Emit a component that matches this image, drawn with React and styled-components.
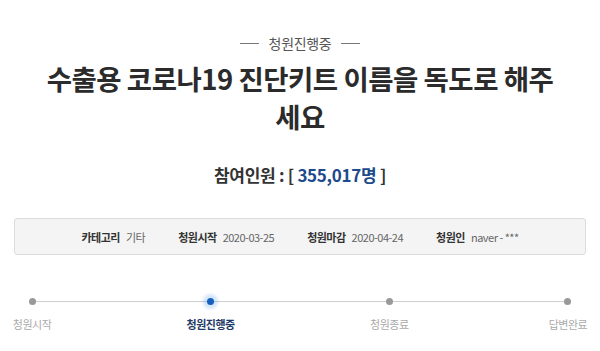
import React from "react";
import styled, { createGlobalStyle } from "styled-components";

const GlobalStyle = createGlobalStyle`
  html, body {
    margin: 0;
    padding: 0;
    background: #ffffff;
    font-family: "Noto Sans CJK KR", "Noto Sans", sans-serif;
  }
`;

const Page = styled.div`
  width: 600px;
  height: 351px;
  overflow: hidden;
  padding-top: 33px;
  box-sizing: border-box;
`;

const Status = styled.div`
  display: flex;
  align-items: center;
  justify-content: center;
  gap: 10px;
  height: 20px;
  font-size: 14px;
  color: #555;
  letter-spacing: -0.3px;

  &::before,
  &::after {
    content: "";
    width: 19px;
    height: 1px;
    background: #777;
  }
`;

const Title = styled.h1`
  margin: 6px 0 0;
  text-align: center;
  font-size: 27.5px;
  line-height: 38px;
  font-weight: 700;
  color: #2b2b2b;
  letter-spacing: -0.5px;
  padding: 0 30px;
`;

const Count = styled.div`
  margin-top: 28px;
  text-align: center;
  font-size: 17px;
  line-height: 24px;
  font-weight: 700;
  color: #333;
  letter-spacing: -0.3px;
`;

const Num = styled.span`
  color: #1d4a8c;
`;

const InfoBox = styled.div`
  margin: 31px 14px 0;
  height: 37px;
  box-sizing: border-box;
  border: 1px solid #dcdcdc;
  border-radius: 3px;
  background: #f4f4f4;
  display: flex;
  align-items: center;
  justify-content: center;
  gap: 33px;
`;

const InfoItem = styled.div`
  display: flex;
  align-items: center;
  gap: 6px;
  font-size: 11px;
  letter-spacing: -0.5px;
`;

const InfoLabel = styled.span`
  font-weight: 700;
  color: #333;
`;

const InfoValue = styled.span`
  color: #666;
`;

const Track = styled.div`
  position: relative;
  margin: 43px 14px 0;
  display: flex;
  justify-content: space-between;

  &::before {
    content: "";
    position: absolute;
    left: 18px;
    right: 20px;
    top: 3px;
    height: 1px;
    background: #cfcfcf;
  }
`;

const Step = styled.div`
  width: 36px;
  display: flex;
  flex-direction: column;
  align-items: center;
  position: relative;
`;

const Dot = styled.span`
  width: 7px;
  height: 7px;
  border-radius: 50%;
  background: ${(p) => (p.$active ? "#1660c0" : "#999")};
  box-shadow: ${(p) =>
    p.$active ? "0 0 3px 4px rgba(60, 140, 230, 0.22)" : "none"};
`;

const StepLabel = styled.span`
  margin-top: 12px;
  white-space: nowrap;
  font-size: 11px;
  line-height: 14px;
  letter-spacing: -0.5px;
  font-weight: ${(p) => (p.$active ? 700 : 400)};
  color: ${(p) => (p.$active ? "#1e3a66" : "#aaa")};
`;

const info = [
  ["카테고리", "기타"],
  ["청원시작", "2020-03-25"],
  ["청원마감", "2020-04-24"],
  ["청원인", "naver - ***"],
];

const steps = [
  { label: "청원시작" },
  { label: "청원진행중", active: true },
  { label: "청원종료" },
  { label: "답변완료" },
];

export default function App() {
  return (
    <>
      <GlobalStyle />
      <Page>
        <Status>청원진행중</Status>
        <Title>
          수출용 코로나19 진단키트 이름을 독도로 해주
          <br />
          세요
        </Title>
        <Count>
          참여인원 : [ <Num>355,017명</Num> ]
        </Count>
        <InfoBox>
          {info.map(([label, value]) => (
            <InfoItem key={label}>
              <InfoLabel>{label}</InfoLabel>
              <InfoValue>{value}</InfoValue>
            </InfoItem>
          ))}
        </InfoBox>
        <Track>
          {steps.map((s) => (
            <Step key={s.label}>
              <Dot $active={s.active} />
              <StepLabel $active={s.active}>{s.label}</StepLabel>
            </Step>
          ))}
        </Track>
      </Page>
    </>
  );
}
